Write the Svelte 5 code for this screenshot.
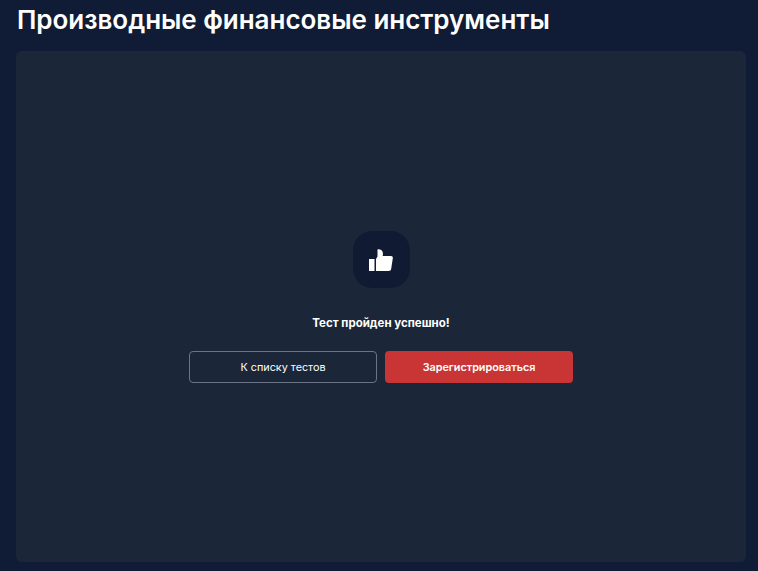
<script>
  const title = 'Производные финансовые инструменты';
</script>

<div class="page">
  <h1>{title}</h1>
  <main class="card">
    <div class="badge">
      <svg class="thumb" width="25" height="22" viewBox="0 0 25 22" aria-hidden="true">
        <rect x="1" y="10" width="5.5" height="12" fill="#fff" />
        <path d="M8 22V10L9.5 7.5V.4C12 0 14 1 14.6 3 15.1 4.4 15 6 14.6 7H23C24.3 7 25 8 24.8 9.2L23.2 19.8C23 21.2 22 22 20.6 22Z" fill="#fff" />
      </svg>
    </div>
    <p class="message">Тест пройден успешно!</p>
    <div class="actions">
      <button class="btn outline">К списку тестов</button>
      <button class="btn primary">Зарегистрироваться</button>
    </div>
  </main>
</div>

<style>
  :global(body) {
    margin: 0;
    background: #101c35;
  }
  .page {
    box-sizing: border-box;
    height: 571px;
    padding: 0 12px 9px 16px;
    display: flex;
    flex-direction: column;
    font-family: Inter, "Noto Sans", sans-serif;
    color: #fff;
    overflow: hidden;
  }
  h1 {
    margin: 0;
    height: 51px;
    padding-left: 1px;
    font-size: 26px;
    line-height: 40px;
    font-weight: 600;
    letter-spacing: -0.03px;
    white-space: nowrap;
  }
  .card {
    flex: 1;
    background: #1b2739;
    border-radius: 6px;
    display: flex;
    flex-direction: column;
    align-items: center;
    padding-top: 180px;
    box-sizing: border-box;
  }
  .badge {
    width: 57px;
    height: 57px;
    margin-left: 1px;
    border-radius: 19px;
    background: #101b33;
    display: flex;
    align-items: center;
    justify-content: center;
  }
  .thumb {
    margin-right: 2px;
  }
  .message {
    margin: 27px 0 0;
    font-size: 11.5px;
    line-height: 16px;
    font-weight: 700;
    text-align: center;
  }
  .actions {
    display: flex;
    gap: 8px;
    margin-top: 20px;
  }
  .btn {
    box-sizing: border-box;
    width: 188px;
    height: 32px;
    border-radius: 4px;
    font-family: inherit;
    font-size: 10.8px;
    color: #fff;
    padding: 0;
  }
  .outline {
    background: transparent;
    border: 1px solid #6b7485;
    font-weight: 400;
  }
  .primary {
    background: #c93534;
    border: none;
    font-weight: 600;
  }
</style>
